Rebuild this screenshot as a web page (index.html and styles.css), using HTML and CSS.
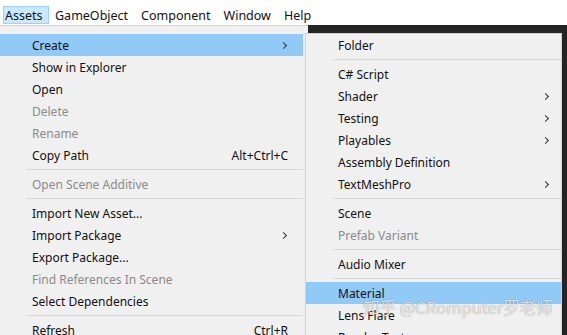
FILE: index.html
```html
<!DOCTYPE html>
<html>

<head>
    <title>Assets Menu</title>
    <meta name="viewport" content="width=device-width, initial-scale=1">
    <link rel="stylesheet" href="styles.css">
</head>

<body>
    <div class="menubar">
        <span class="barItem active">Assets</span>
        <span class="barItem">GameObject</span>
        <span class="barItem">Component</span>
        <span class="barItem">Window</span>
        <span class="barItem">Help</span>
    </div>
    <div class="workspace">
        <div class="menu mainMenu">
            <div class="row hover"><span>Create</span><i class="arrow"></i></div>
            <div class="row"><span>Show in Explorer</span></div>
            <div class="row"><span>Open</span></div>
            <div class="row off"><span>Delete</span></div>
            <div class="row off"><span>Rename</span></div>
            <div class="row"><span>Copy Path</span><span class="key">Alt+Ctrl+C</span></div>
            <div class="sep"></div>
            <div class="row off"><span>Open Scene Additive</span></div>
            <div class="sep"></div>
            <div class="row"><span>Import New Asset...</span></div>
            <div class="row"><span>Import Package</span><i class="arrow"></i></div>
            <div class="row"><span>Export Package...</span></div>
            <div class="row off"><span>Find References In Scene</span></div>
            <div class="row"><span>Select Dependencies</span></div>
            <div class="sep"></div>
            <div class="row"><span>Refresh</span><span class="key">Ctrl+R</span></div>
        </div>
        <div class="editor">
            <div class="menu subMenu">
                <div class="row"><span>Folder</span></div>
                <div class="sep"></div>
                <div class="row"><span>C# Script</span></div>
                <div class="row"><span>Shader</span><i class="arrow"></i></div>
                <div class="row"><span>Testing</span><i class="arrow"></i></div>
                <div class="row"><span>Playables</span><i class="arrow"></i></div>
                <div class="row"><span>Assembly Definition</span></div>
                <div class="row"><span>TextMeshPro</span><i class="arrow"></i></div>
                <div class="sep"></div>
                <div class="row"><span>Scene</span></div>
                <div class="row off"><span>Prefab Variant</span></div>
                <div class="sep"></div>
                <div class="row"><span>Audio Mixer</span></div>
                <div class="sep"></div>
                <div class="row hover"><span>Material</span></div>
                <div class="row"><span>Lens Flare</span></div>
                <div class="row"><span>Render Texture</span></div>
                <span class="watermark">知乎 @CRomputer罗老师</span>
            </div>
        </div>
    </div>
</body>

</html>
```

FILE: styles.css
```css
* {
    box-sizing: border-box
}

body {
    font-family: "Noto Sans", "Noto Sans CJK SC", sans-serif;
    font-size: 12px;
    color: #111;
    margin: 0;
    height: 335px;
    overflow: hidden;
    background: #fff;
}

.menubar {
    height: 25px;
    display: flex;
    align-items: flex-end;
    padding-left: 3px;
    padding-bottom: 1px;
    font-size: 12.5px;
}

.barItem {
    height: 18px;
    line-height: 17px;
    padding: 0 5.5px;
    border: 1px solid transparent;
}

.barItem.active {
    padding: 0 5px 0 1px;
    background: #cce8ff;
    border-color: #99d1ff;
}

.workspace {
    display: flex;
    height: 310px;
}

.menu {
    background: #f0f0f0;
}

.mainMenu {
    width: 308px;
    padding: 8px 5px 0 0;
    border-top: 1px solid #d5d5d5;
}

.editor {
    flex: 1;
    background: #242424;
    padding: 8px 5px 0 0;
}

.subMenu {
    position: relative;
    margin-left: -3px;
    height: 320px;
    border: 1px solid #d2d2d2;
    border-bottom: none;
}

.row {
    height: 22px;
    display: flex;
    align-items: center;
    padding-left: 32px;
    padding-right: 15px;
}

.subMenu .row {
    padding-left: 32px;
    padding-right: 11px;
}

.row span:first-child {
    flex: 1;
}

.row.hover {
    background: #91c9f7;
}

.row.off {
    color: #8a8a8a;
}

.key {
    text-align: right;
}

.arrow {
    width: 5px;
    height: 5px;
    border-right: 1px solid #333;
    border-top: 1px solid #333;
    transform: rotate(45deg);
    margin-right: 2px;
}

.sep {
    height: 7px;
    padding-top: 3px;
    margin-left: 27px;
}

.sep::before {
    content: "";
    display: block;
    height: 1px;
    background: #d7d7d7;
}

.watermark {
    position: absolute;
    left: 57px;
    top: 262px;
    font-family: "Noto Sans CJK SC", sans-serif;
    font-size: 16.5px;
    line-height: 22px;
    color: rgba(255, 255, 255, 0.8);
    text-shadow: 0 0 1px rgba(0, 0, 0, 0.5);
    white-space: nowrap;
}
```
